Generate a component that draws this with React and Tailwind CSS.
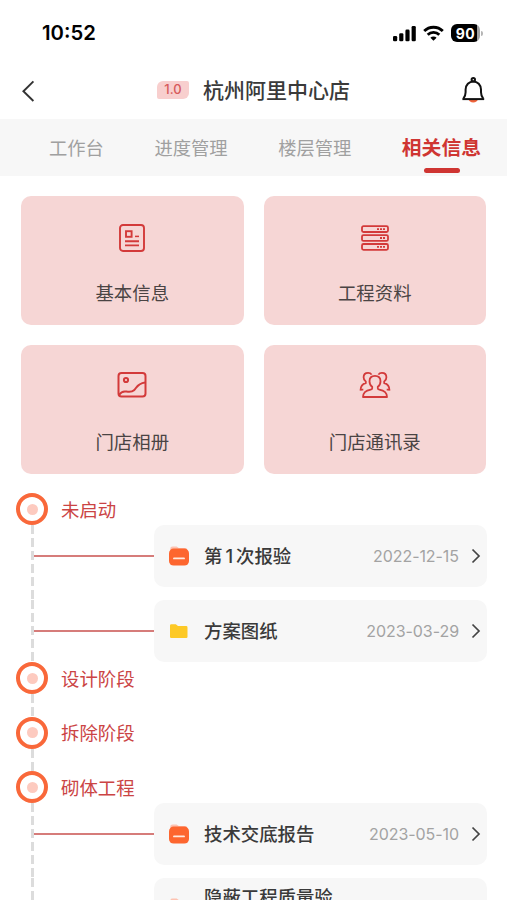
import React from "react";

const tabs = ["工作台", "进度管理", "楼层管理", "相关信息"];

const stages = [
  {
    name: "未启动",
    files: [
      { title: "第1次报验", date: "2022-12-15", icon: "report" },
      { title: "方案图纸", date: "2023-03-29", icon: "folder" },
    ],
  },
  { name: "设计阶段", files: [] },
  { name: "拆除阶段", files: [] },
  {
    name: "砌体工程",
    files: [
      { title: "技术交底报告", date: "2023-05-10", icon: "report" },
      { title: "隐蔽工程质量验", icon: "report", tall: true },
    ],
  },
];

const InfoIcon = () => (
  <svg width="28" height="30" viewBox="0 0 28 30" fill="none" stroke="#d33a3a" strokeWidth="1.9">
    <rect x="2" y="2" width="24" height="26" rx="3" />
    <rect x="8" y="8.2" width="5.6" height="5.6" />
    <path d="M7 18.2h14M7 22.4h14" />
    <path d="M17 13.4h4" strokeWidth="1.5" />
  </svg>
);

const ServerIcon = () => (
  <svg width="30" height="28" viewBox="0 0 30 28" fill="none" stroke="#d33a3a" strokeWidth="1.8">
    {[2.2, 11.1, 20].map((y) => (
      <rect key={y} x="2" y={y} width="26" height="5.8" rx="1.5" />
    ))}
    <path d="M17 5.1h8M20 14h5M17 22.900h8" strokeDasharray="2 1" strokeWidth="1.800" />
  </svg>
);

const AlbumIcon = () => (
  <svg className="-mt-[4px]" width="30" height="28" viewBox="0 0 30 28" fill="none" stroke="#d33a3a" strokeWidth="2">
    <rect x="1.5" y="2" width="27" height="23.5" rx="3" />
    <circle cx="9" cy="9" r="2.1" />
    <path d="M2 23.8c2-2.8 4.2-3.7 6.8-3.3 3.2.5 5.8 1.1 8.2-1.2 2.8-2.7 3.4-6.8 11-7.8" />
  </svg>
);

const PeopleIcon = () => (
  <svg className="-mt-[4px]" width="32" height="28" viewBox="0 0 32 28" fill="none" stroke="#d33a3a" strokeWidth="1.8" strokeLinejoin="round">
    <path d="M13.200 15.800c-1.900-1.200-2.700-3.100-2.700-5.500 0-3.500 2-5.500 5.500-5.500s5.500 2 5.500 5.500c0 2.400-.8 4.300-2.700 5.500v1.400c0 .9.500 1.300 1.500 1.500 5.300 1 7.600 2.600 7.700 7.300H4c.1-4.700 2.400-6.300 7.700-7.300 1-.2 1.500-.6 1.500-1.500z" />
    <path d="M12.600 3.600c-.8-1.300-2-1.800-3.500-1.800-2.700 0-4.500 1.700-4.500 4.500 0 1.900.8 3.400 2.200 4.300v1.600c-3.500.9-5.300 2.500-5.300 7.300M19.400 3.600c.8-1.300 2-1.800 3.500-1.800 2.700 0 4.500 1.700 4.500 4.500 0 1.900-.8 3.400-2.200 4.300v1.600c3.500.9 5.300 2.500 5.300 7.300" />
    <path d="M1.500 18.700h2.800M27.700 18.700h2.800" />
  </svg>
);

const entries = [
  { label: "基本信息", Icon: InfoIcon },
  { label: "工程资料", Icon: ServerIcon },
  { label: "门店相册", Icon: AlbumIcon },
  { label: "门店通讯录", Icon: PeopleIcon },
];

const StatusBar = () => (
  <div className="flex h-[66px] items-center justify-between pr-[24px] pl-[42px] text-black">
    <span className="pt-px text-[20.3px] font-semibold">10:52</span>
    <div className="flex items-center">
      <svg width="23" height="17" viewBox="0 0 23 17" fill="#000">
        <rect x="0" y="11" width="4.2" height="5.3" rx="1.3" />
        <rect x="6.2" y="8.3" width="4.2" height="8" rx="1.3" />
        <rect x="12.4" y="4.6" width="4.2" height="11.7" rx="1.3" />
        <rect x="18.6" y="1" width="4.2" height="15.3" rx="1.3" />
      </svg>
      <svg className="ml-[7px]" width="21" height="17" viewBox="0 0 21 17" fill="none" stroke="#000" strokeWidth="2.8">
        <path d="M1.2 6.1a13.2 13.2 0 0 1 18.6 0M4.7 9.8a8.2 8.2 0 0 1 11.6 0" />
        <path d="M10.5 15.8l-3.1-3.1a4.4 4.4 0 0 1 6.2 0z" fill="#000" stroke="none" />
      </svg>
      <div className="ml-[7px] flex h-[18px] w-[29px] items-center justify-center rounded-[6px] bg-[linear-gradient(90deg,#000_89%,#a3a3a3_89%)] text-[14px] font-bold tracking-[0.5px] text-white">
        90
      </div>
      <span className="ml-px h-[5px] w-[2px] rounded-r-full bg-[#b5b5b5]" />
    </div>
  </div>
);

const Header = () => (
  <header className="flex h-[53px] items-center justify-between pr-[21px] pb-[4px] pl-[21px] text-[#3a3a3a]">
    <svg width="26" height="24" viewBox="0 0 26 24" fill="none" stroke="#333" strokeWidth="1.9">
      <path d="M12.4 2.400L2.400 12.200l10 9.800" />
    </svg>
    <div className="flex items-center">
      <span className="mb-px flex h-[18px] w-[32px] items-center justify-center rounded-tl-[6px] rounded-tr-[2px] rounded-br-[6px] rounded-bl-[2px] bg-[#f8cfce] text-[13px] font-medium text-[#d65a5a]">
        1.0
      </span>
      <h1 className="ml-[14px] text-[21px] leading-[28px] font-medium">杭州阿里中心店</h1>
    </div>
    <svg width="26" height="28" viewBox="0 0 26 28" fill="none">
      <path d="M8.300 22a5.200 5 0 0 0 9.900 0z" fill="#f0643c" />
      <path d="M2.400 22.100h21.800" stroke="#111" strokeWidth="2" />
      <path d="M3.400 21.600c1.500-2 2.200-3.900 2.200-6.400v-2.600a7.700 8.200 0 0 1 15.400 0v2.600c0 2.500.7 4.400 2.200 6.400" stroke="#111" strokeWidth="2" />
      <circle cx="13.300" cy="2.800" r="1.700" stroke="#111" strokeWidth="2" />
    </svg>
  </header>
);

const Tabs = () => (
  <nav className="flex h-[57px] items-center justify-between bg-[#f7f7f7] pt-[2px] pr-[26px] pl-[49px] text-[18.3px] text-[#a0a0a0]">
    {tabs.map((tab) =>
      tab === "相关信息" ? (
        <div key={tab} className="relative text-[19.8px] font-bold text-[#cf3532]">
          {tab}
          <span className="absolute -bottom-[10px] left-[22px] h-[5px] w-[36px] rounded-full bg-[#cf3532]" />
        </div>
      ) : (
        <span key={tab}>{tab}</span>
      )
    )}
  </nav>
);

const Dashes = () => (
  <span className="w-[3px] shrink-0 self-stretch bg-[repeating-linear-gradient(180deg,#dcdcdc_0px,#dcdcdc_8.7px,transparent_8.7px,transparent_13px)]" />
);

const ReportIcon = ({ raised }) => (
  <svg className={raised ? "-mt-[5px]" : ""} width="20" height="20" viewBox="0 0 20 20">
    <path d="M1.2 6V3a2.4 2.4 0 0 1 2.4-2.4h4L9.8 2h6a2.6 2.6 0 0 1 2.6 2.2V6z" fill="#fdc3b2" />
    <rect x="0" y="2.6" width="20" height="17" rx="4.6" fill="#fd662f" />
    <path d="M5 12.4h10" stroke="#ffe9df" strokeWidth="1.9" strokeLinecap="round" />
  </svg>
);

const FolderIcon = () => (
  <svg width="20" height="20" viewBox="0 0 20 20">
    <path d="M1 4.500a1.200 1.200 0 0 1 1.200-1.200h4.600L9 5.100h8.200a1.300 1.300 0 0 1 1.300 1.300v9.400a1.200 1.200 0 0 1-1.200 1.200H2.200A1.200 1.200 0 0 1 1 15.800z" fill="#fdc926" />
  </svg>
);

// digits get a little air between the Chinese characters
const FileTitle = ({ text }) => (
  <p className="ml-[15px] w-[140px] shrink-0 text-[18.4px] leading-[26px] font-medium text-[#3a3a3a]">
    {text.split(/(\d+)/).map((part, i) =>
      /^\d+$/.test(part) ? (
        <span key={i} className="mx-[3px]">
          {part}
        </span>
      ) : (
        part
      )
    )}
  </p>
);

const FileRow = ({ file, last }) => (
  <div className={`flex pl-[31px] ${last ? "h-[62px]" : "h-[75px]"}`}>
    <Dashes />
    <span className={`h-[2px] w-[120px] shrink-0 bg-[#d67c7a] ${file.tall ? "mt-[38px]" : "mt-[30px]"}`} />
    <div
      className={`flex w-[333px] shrink-0 rounded-[10px] bg-[#f7f7f7] pr-[6px] pl-[15px] ${
        file.tall ? "h-[76px] items-start pt-[6px]" : "h-[62px] items-center"
      }`}
    >
      {file.icon === "folder" ? (
        <FolderIcon />
      ) : (
        <span className={file.tall ? "mt-[19px]" : ""}>
          <ReportIcon raised={file.tall} />
        </span>
      )}
      <FileTitle text={file.title} />
      {file.date && (
        <>
          <span className="ml-auto text-[16px] tracking-[-0.06px] text-[#a3a3a3]">{file.date}</span>
          <svg className="ml-[12px]" width="10" height="16" viewBox="0 0 10 16" fill="none" stroke="#444" strokeWidth="1.7">
            <path d="M1.500 1.500L8 8l-6.500 6.500" />
          </svg>
        </>
      )}
    </div>
  </div>
);

const Stage = ({ stage }) => (
  <section>
    <div className="flex h-[32px] items-center pl-[16px]">
      <span className="flex h-[32px] w-[32px] items-center justify-center rounded-full border-[4px] border-[#f9683a]">
        <span className="h-[11px] w-[11px] rounded-full bg-[#fdcabf]" />
      </span>
      <h2 className="ml-[13px] pt-px text-[18.4px] leading-[28px] text-[#cb4444]">{stage.name}</h2>
    </div>
    {stage.files.length === 0 && (
      <div className="flex h-[22.5px] pl-[31px]">
        <Dashes />
      </div>
    )}
    {stage.files.map((file, i) => (
      <FileRow key={file.title} file={file} last={i === stage.files.length - 1} />
    ))}
  </section>
);

const App = () => {
  return (
    <div className="h-[900px] w-[507px] overflow-hidden bg-white font-['Inter','Noto_Sans_CJK_SC',sans-serif]">
      <StatusBar />
      <Header />
      <Tabs />
      <div className="grid grid-cols-2 gap-[20px] px-[21px] pt-[20px]">
        {entries.map(({ label, Icon }) => (
          <button
            key={label}
            className="flex h-[129px] flex-col items-center rounded-[10px] bg-[#f6d6d5] pt-[27px] text-[18.4px] text-[#4a4444]"
          >
            <span className="flex h-[30px] items-center">
              <Icon />
            </span>
            <span className="mt-[26px] leading-[28px]">{label}</span>
          </button>
        ))}
      </div>
      <main className="pt-[19px]">
        {stages.map((stage) => (
          <Stage key={stage.name} stage={stage} />
        ))}
      </main>
    </div>
  );
};

export default App;
